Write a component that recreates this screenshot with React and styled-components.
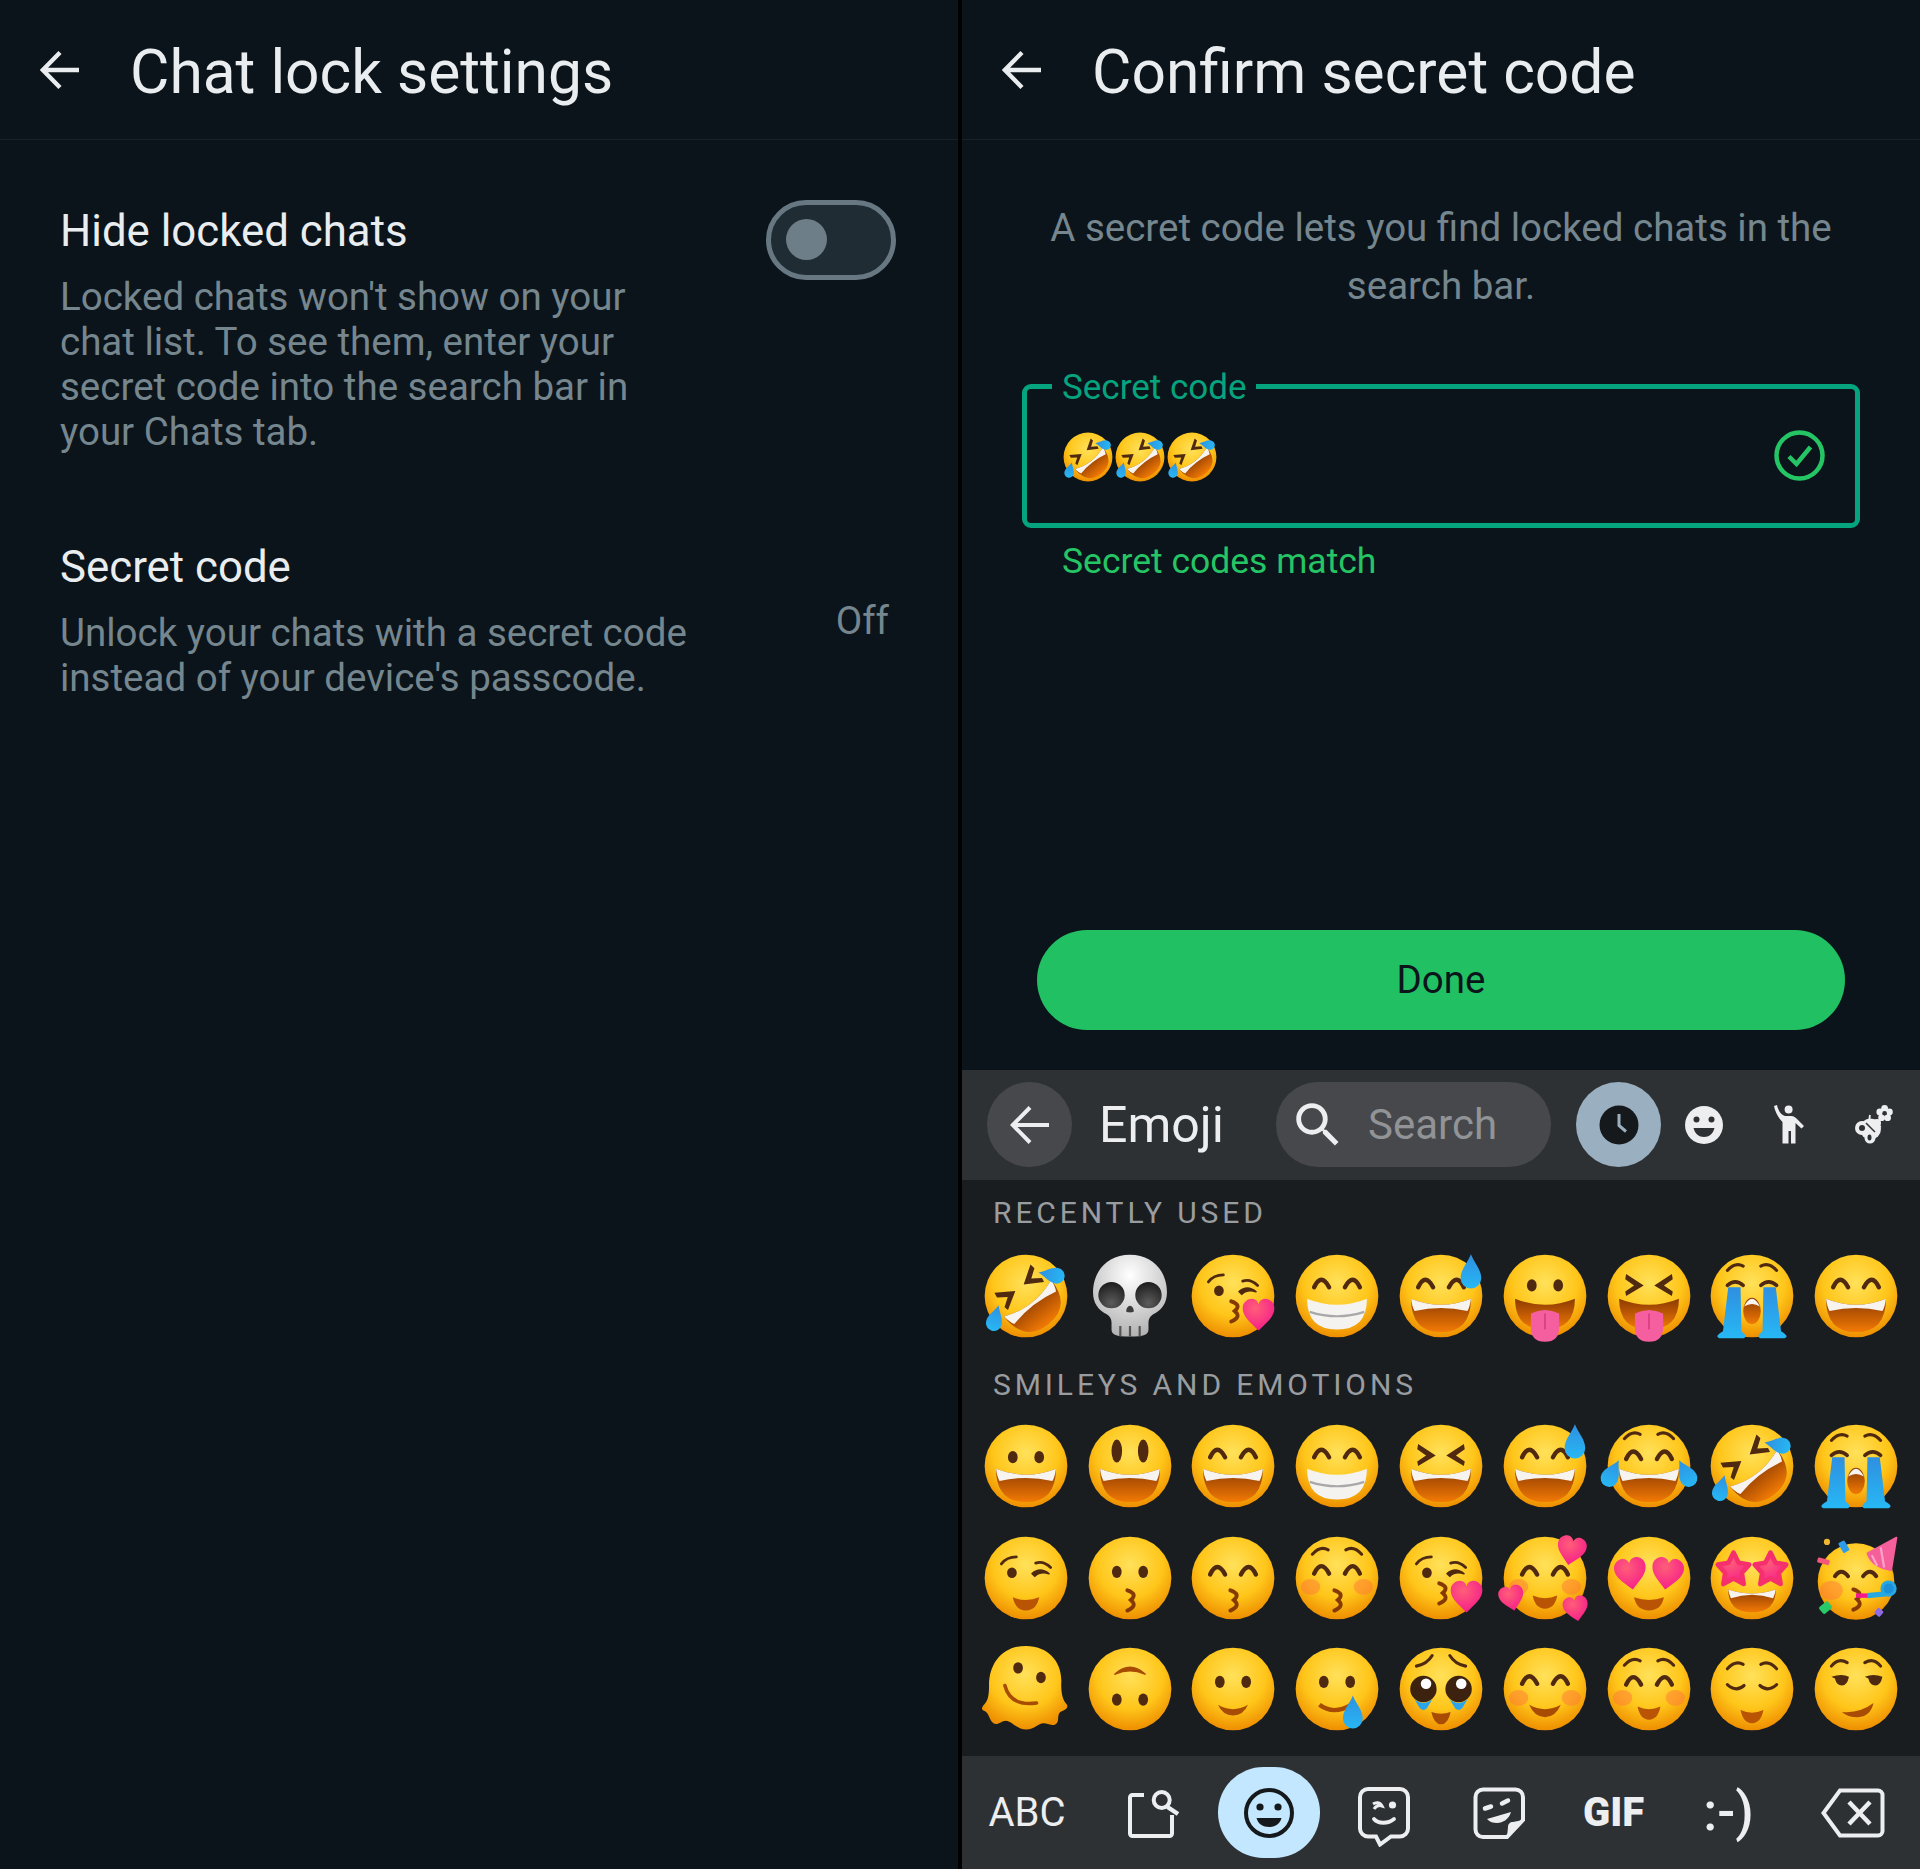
import React from 'react';
import styled, { createGlobalStyle } from 'styled-components';

const Global = createGlobalStyle`
  html, body {
    margin: 0;
    padding: 0;
    background: #0b141a;
  }
  * {
    box-sizing: border-box;
  }
`;

const Page = styled.div`
  display: flex;
  width: 1920px;
  height: 1869px;
  overflow: hidden;
  background: #000;
  font-family: Roboto, 'Liberation Sans', sans-serif;
`;
const Panel = styled.section`
  display: flex;
  flex-direction: column;
  flex: 0 0 958px;
  margin-left: ${(p) => (p.$side === 'left' ? '0' : '4px')};
  height: 100%;
  background: #0b141a;
`;
const Header = styled.header`
  display: flex;
  align-items: center;
  flex: 0 0 140px;
  padding: 0 0 0 40px;
  border-bottom: 1px solid #182127;
`;
const Title = styled.h1`
  margin: 7px 0 0 50px;
  color: #e9edef;
  font-size: 60.5px;
  font-weight: 400;
  line-height: 1;
`;
const SettingRow = styled.div`
  display: flex;
  align-items: ${(p) => (p.$center ? 'center' : 'flex-start')};
  justify-content: space-between;
  padding: 0 63px 0 60px;
  margin-top: ${(p) => p.$top}px;
`;
const SettingTitle = styled.div`
  color: #e9edef;
  font-size: 43.8px;
  line-height: 50px;
`;
const SettingDesc = styled.div`
  margin-top: 18px;
  color: #75868f;
  font-size: 38.5px;
  line-height: 45px;
`;
const Toggle = styled.div`
  display: flex;
  align-items: center;
  width: 130px;
  height: 80px;
  margin-top: -6px;
  margin-right: -1px;
  padding: 0 0 2px 15px;
  border: 5px solid #677883;
  border-radius: 40px;
  background: #1f2c33;
`;
const Knob = styled.div`
  width: 41px;
  height: 41px;
  border-radius: 50%;
  background: #6d7e89;
`;
const OffLabel = styled.div`
  margin: 0 6px 2px 0;
  color: #75868f;
  font-size: 38.5px;
`;
const Intro = styled.p`
  margin: 59px 0 0;
  color: #75868f;
  font-size: 38.5px;
  line-height: 57.5px;
  text-align: center;
`;
const Field = styled.fieldset`
  height: 162px;
  margin: 52px 60px 0;
  padding: 0 30px 0 35px;
  border: 5px solid #06a37f;
  border-radius: 9px;
`;
const Legend = styled.legend`
  margin-left: -10px;
  padding: 0 10px;
  color: #06a37f;
  font-size: 35px;
  line-height: 40px;
  transform: translateY(2px);
`;
const FieldRow = styled.div`
  display: flex;
  align-items: center;
  justify-content: space-between;
  padding-top: 21px;
`;
const FieldEmojis = styled.div`
  display: flex;
  margin-top: 4px;
`;
const FieldEmoji = styled.span`
  display: flex;
  width: 52px;
  justify-content: center;
`;
const MatchText = styled.div`
  margin: 13px 0 0 100px;
  color: #25c566;
  font-size: 35.5px;
  line-height: 40px;
`;
const DoneButton = styled.button`
  align-self: center;
  width: 808px;
  height: 100px;
  margin-top: auto;
  margin-bottom: 40px;
  padding-bottom: 2px;
  border: 0;
  border-radius: 50px;
  background: #21c063;
  color: #0b141a;
  font-family: inherit;
  font-size: 38.5px;
`;
const Keyboard = styled.div`
  display: flex;
  flex-direction: column;
  flex: 0 0 799px;
  background: #1a1d20;
`;
const KeyboardTop = styled.div`
  display: flex;
  align-items: center;
  flex: 0 0 110px;
  padding: 0 0 1px 25px;
  background: #2e3134;
`;
const RoundButton = styled.div`
  display: flex;
  align-items: center;
  justify-content: center;
  flex: 0 0 85px;
  height: 85px;
  border-radius: 50%;
  background: ${(p) => p.$bg || 'transparent'};
`;
const KeyboardTitle = styled.div`
  flex: 0 0 204px;
  padding-left: 27px;
  color: #eceef0;
  font-size: 50px;
`;
const SearchPill = styled.div`
  display: flex;
  align-items: center;
  flex: 0 0 275px;
  height: 85px;
  margin-right: 25px;
  padding-left: 13px;
  border-radius: 42px;
  background: #46484b;
  color: #919396;
  font-size: 42px;
`;
const SearchText = styled.span`
  margin-left: 21px;
`;
const SectionLabel = styled.div`
  margin: 13px 0 ${(p) => (p.$first ? '7px' : '6px')} 31px;
  color: #9a9da0;
  font-size: 30px;
  line-height: 40px;
  letter-spacing: 3.9px;
`;
const EmojiGrid = styled.div`
  display: grid;
  grid-template-columns: repeat(9, 1fr);
  grid-auto-rows: 111.5px;
  align-items: center;
  justify-items: center;
  padding: 0 12px;
`;
const KeyboardBottom = styled.div`
  display: flex;
  align-items: center;
  margin-top: auto;
  flex: 0 0 113px;
  background: #2e3134;
  color: #eceef0;
`;
const BottomSlot = styled.div`
  display: flex;
  align-items: center;
  justify-content: center;
  flex: 0 0 ${(p) => p.$w || 115}px;
  height: 91px;
  padding: ${(p) => p.$top || 0}px 0 0 ${(p) => p.$left || 0}px;
`;
const ActivePill = styled.div`
  display: flex;
  align-items: center;
  justify-content: center;
  width: 102px;
  height: 91px;
  border-radius: 46px;
  background: #c2e7ff;
`;
const BottomText = styled.span`
  font-size: ${(p) => p.$size}px;
  font-weight: ${(p) => p.$weight || 400};
  line-height: 1;
`;

const BackArrow = ({ size = 40, color = '#e9edef', width = 4.4 }) => (
  <svg width={size} height={size} viewBox="0 0 40 40" fill="none" stroke={color} strokeWidth={width}>
    <path d="M39 20H3M20 2.5L2.8 20L20 37.5" />
  </svg>
);

const SearchIcon = () => (
  <svg width="58" height="58" viewBox="0 0 24 24" fill="#eceef0">
    <path d="M15.5 14h-.79l-.28-.27A6.471 6.471 0 0 0 16 9.5 6.5 6.5 0 1 0 9.5 16c1.61 0 3.09-.59 4.23-1.57l.27.28v.79l5 4.99L20.49 19l-4.99-5zm-6 0C7.01 14 5 11.99 5 9.5S7.01 5 9.5 5 14 7.01 14 9.5 11.99 14 9.5 14z" />
  </svg>
);

const ClockIcon = () => (
  <svg width="40" height="40" viewBox="0 0 40 40">
    <circle cx="20" cy="20" r="19.5" fill="#15191c" />
    <path d="M20 9v11.5l7 6" fill="none" stroke="#9aafbf" strokeWidth="3" />
  </svg>
);

const SmileyTab = () => (
  <svg width="40" height="40" viewBox="0 0 40 40">
    <circle cx="20" cy="20" r="19" fill="#eceef0" />
    <circle cx="12.5" cy="14.5" r="3" fill="#2e3134" />
    <circle cx="27.5" cy="14.5" r="3" fill="#2e3134" />
    <path d="M9.5 23h21c-1.500 6-5.500 9-10.500 9s-9-3-10.500-9z" fill="#2e3134" />
  </svg>
);

const PersonTab = () => (
  <svg width="32" height="40" viewBox="0 0 32 40" fill="#eceef0">
    <circle cx="15.6" cy="4.500" r="4" />
    <path d="M1 1L4 0C5 5 8 10 12 11H18C21 11 23 13 25 15L31 21L28.500 23.500L22.500 18V38.500H18V26H15.500V38.500H9.500V17C6 14 2 7 1 1Z" />
  </svg>
);

const ActivityTab = () => (
  <svg width="40" height="40" viewBox="0 0 40 40">
    <g fill="#eceef0">
      <circle cx="16.500" cy="24" r="10.500" />
      <circle cx="8" cy="23" r="7" />
      <circle cx="16" cy="33" r="5.500" />
      <circle cx="23" cy="18" r="4" />
      <circle cx="30.600" cy="3.500" r="3.400" />
      <circle cx="35.400" cy="7" r="3.400" />
      <circle cx="33.600" cy="12.700" r="3.400" />
      <circle cx="27.600" cy="12.700" r="3.400" />
      <circle cx="25.800" cy="7" r="3.400" />
    </g>
    <circle cx="30.600" cy="8.300" r="2.300" fill="#2e3134" />
    <circle cx="8" cy="23" r="3" fill="#2e3134" />
    <ellipse cx="15.500" cy="32.500" rx="2" ry="3" fill="#2e3134" />
    <path d="M15 16l1-6M22 20l5 2M14 28l-1-11" fill="none" stroke="#eceef0" strokeWidth="1.800" />
    <path d="M12 18l9 9" stroke="#2e3134" strokeWidth="1.500" />
  </svg>
);

const CheckCircle = () => (
  <svg width="51" height="51" viewBox="0 0 51 51" fill="none" stroke="#25c566">
    <circle cx="25.500" cy="25.500" r="23" strokeWidth="4.500" />
    <path d="M15 26.500l7.500 7.500L36.500 17" strokeWidth="4.500" />
  </svg>
);

const ScanIcon = () => (
  <svg width="52" height="51" viewBox="0 0 52 51" fill="none" stroke="#eceef0" strokeWidth="4">
    <path d="M16 8H4.500A2.500 2.500 0 0 0 2 10.500V46.500A2.500 2.500 0 0 0 4.500 49H41.500A2.500 2.500 0 0 0 44 46.500V28" />
    <circle cx="33.700" cy="13" r="8" />
    <path d="M39.500 20L50 27" strokeWidth="4.500" />
  </svg>
);

const ActiveSmile = () => (
  <svg width="52" height="52" viewBox="0 0 52 52">
    <circle cx="26" cy="26" r="23" fill="none" stroke="#15191c" strokeWidth="4" />
    <circle cx="17" cy="20" r="3.600" fill="#15191c" />
    <circle cx="35" cy="20" r="3.600" fill="#15191c" />
    <path d="M13.500 31h25c-1.500 6-6.500 9-12.500 9s-11-3-12.500-9z" fill="#15191c" />
  </svg>
);

const StickerBubble = () => (
  <svg width="52" height="60" viewBox="0 0 52 60" fill="none" stroke="#eceef0" strokeWidth="4">
    <path d="M10 2h32a8 8 0 0 1 8 8v31.500a8 8 0 0 1-8 8h-9l-11 8-4-8h-8a8 8 0 0 1-8-8V10a8 8 0 0 1 8-8z" />
    <path d="M15 17c3-2 7-2 9 2-3-1-6 0-8 3" strokeWidth="3" />
    <circle cx="34.500" cy="18" r="3.600" fill="#eceef0" stroke="none" />
    <path d="M16 32c4 5 14 5 20 0" strokeWidth="3.800" strokeLinecap="round" />
  </svg>
);

const StickerIcon = () => (
  <svg width="52" height="52" viewBox="0 0 52 52" fill="none" stroke="#eceef0" strokeWidth="4">
    <path d="M10 2.500h32.500a7.500 7.500 0 0 1 7.500 7.500v23L34 50H10a7.500 7.500 0 0 1-7.500-7.500V10A7.500 7.500 0 0 1 10 2.500z" />
    <path d="M50 33L34 50L35 40C35 37 37 35 40 35Z" fill="#eceef0" stroke="none" />
    <path d="M12 21.500l6-2M29 16.500l6-3" strokeWidth="4.500" strokeLinecap="round" />
    <path d="M14 32L38 25C36 32 30 36 24 36C20 36 17 35 14 32Z" fill="#eceef0" stroke="none" />
  </svg>
);

const BackspaceIcon = () => (
  <svg width="64" height="50" viewBox="0 0 64 50" fill="none" stroke="#eceef0" strokeWidth="4">
    <path d="M19 2.500h38a4.500 4.500 0 0 1 4.500 4.500v36a4.500 4.500 0 0 1-4.500 4.500H19L2.500 25z" />
    <path d="M28 14l21 22M49 14L28 36" strokeWidth="4.500" />
  </svg>
);

/* emoji parts */
const BROWN = '#4f2a10';

const Defs = () => (
  <defs>
    <radialGradient id="faceFill" cx="50%" cy="34%" r="66%">
      <stop offset="0%" stopColor="#ffe15a" />
      <stop offset="60%" stopColor="#ffc61a" />
      <stop offset="100%" stopColor="#ee8e00" />
    </radialGradient>
    <linearGradient id="mouthFill" x1="0" y1="0" x2="0" y2="1">
      <stop offset="0%" stopColor="#8c3a02" />
      <stop offset="100%" stopColor="#f27a05" />
    </linearGradient>
    <linearGradient id="tearFill" x1="0" y1="0" x2="0" y2="1">
      <stop offset="0%" stopColor="#2f8fe0" />
      <stop offset="100%" stopColor="#27b8f5" />
    </linearGradient>
    <radialGradient id="heartFill" cx="40%" cy="30%" r="80%">
      <stop offset="0%" stopColor="#ff5e78" />
      <stop offset="100%" stopColor="#f5178c" />
    </radialGradient>
    <radialGradient id="skullFill" cx="50%" cy="25%" r="85%">
      <stop offset="0%" stopColor="#ffffff" />
      <stop offset="100%" stopColor="#a8a8a8" />
    </radialGradient>
    <radialGradient id="socketFill" cx="50%" cy="80%" r="80%">
      <stop offset="0%" stopColor="#5c5c5c" />
      <stop offset="100%" stopColor="#1c1c1c" />
    </radialGradient>
  </defs>
);

const Face = () => <circle cx="50" cy="50" r="47" fill="url(#faceFill)" />;
const DotEyes = ({ y = 38 }) => (
  <g fill={BROWN}>
    <ellipse cx="35" cy={y} rx="5.500" ry="7" />
    <ellipse cx="65" cy={y} rx="5.500" ry="7" />
  </g>
);
const TallEyes = () => (
  <g fill={BROWN}>
    <ellipse cx="35" cy="33" rx="6" ry="13" />
    <ellipse cx="65" cy="33" rx="6" ry="13" />
  </g>
);
const ArcEyes = ({ y = 40 }) => (
  <g fill="none" stroke={BROWN} strokeWidth="5" strokeLinecap="round">
    <path d={`M24 ${y} Q32 ${y - 17} 41 ${y}`} />
    <path d={`M59 ${y} Q68 ${y - 17} 76 ${y}`} />
  </g>
);
const XEyes = () => (
  <g fill={BROWN}>
    <path d="M24 25L44 38L24 50L23 45L33 38L23 31Z" />
    <path d="M76 25L56 38L76 50L77 45L67 38L77 31Z" />
  </g>
);
const Brows = ({ y = 18 }) => (
  <g fill="none" stroke={BROWN} strokeWidth="3.500" strokeLinecap="round">
    <path d={`M22 ${y + 7} Q31 ${y - 3} 40 ${y + 2}`} />
    <path d={`M60 ${y + 2} Q69 ${y - 3} 78 ${y + 7}`} />
  </g>
);
const OpenSmile = () => (
  <g>
    <path d="M16 53 Q50 67 84 53 Q84 91 50 91 Q16 91 16 53Z" fill="url(#mouthFill)" />
    <path d="M16 53 Q50 67 84 53 Q83 62 80 67 Q50 60 20 67 Q17 62 16 53Z" fill="#f7f4ef" />
  </g>
);
const TeethGrin = () => (
  <g>
    <path d="M16 53 Q50 67 84 53 Q84 88 50 88 Q16 88 16 53Z" fill="#f5f3f0" />
    <path d="M19 68 Q50 78 81 68" fill="none" stroke="#a8a8a8" strokeWidth="2.500" />
  </g>
);
const SmallSmile = ({ y = 68, w = 15 }) => (
  <path d={`M${50 - w} ${y} Q50 ${y + 6} ${50 + w} ${y} Q${50 + w - 3} ${y + 15} 50 ${y + 15} Q${50 - w + 3} ${y + 15} ${50 - w} ${y}Z`} fill="#b85403" />
);
const KissMouth = ({ x = 50, y = 64 }) => (
  <path
    d={`M${x - 3} ${y - 8} Q${x + 9} ${y - 4} ${x + 1} ${y + 3} Q${x + 9} ${y + 10} ${x - 3} ${y + 15}`}
    fill="none"
    stroke="#853a03"
    strokeWidth="4.500"
    strokeLinecap="round"
  />
);
const Blush = () => (
  <g fill="#ff7a3c" opacity="0.5">
    <ellipse cx="20" cy="60" rx="11" ry="9" />
    <ellipse cx="80" cy="60" rx="11" ry="9" />
  </g>
);
const Tear = ({ x, y, s = 1, r = 0 }) => (
  <path
    transform={`translate(${x} ${y}) rotate(${r}) scale(${s})`}
    d="M0 -15 C3 -7 9 -2 9 6 A9 9 0 0 1 -9 6 C-9 -2 -3 -7 0 -15Z"
    fill="url(#tearFill)"
  />
);
const Heart = ({ x, y, s = 1, r = 0 }) => (
  <path
    transform={`translate(${x} ${y}) rotate(${r}) scale(${s})`}
    d="M0 16 C-8 8 -15 3 -15 -5 C-15 -11 -10 -14 -6 -14 C-3 -14 -1 -12 0 -9 C1 -12 3 -14 6 -14 C10 -14 15 -11 15 -5 C15 3 8 8 0 16Z"
    fill="url(#heartFill)"
  />
);
const Star = ({ x, y, s = 1 }) => (
  <path
    transform={`translate(${x} ${y}) scale(${s})`}
    d="M0 -17 L5.500 -6 L17 -4 L9 5 L11 17 L0 11 L-11 17 L-9 5 L-17 -4 L-5.500 -6Z"
    fill="url(#heartFill)"
    stroke="#f5306c"
    strokeWidth="5"
    strokeLinejoin="round"
  />
);
const WinkEyes = () => (
  <g>
    <ellipse cx="34" cy="44" rx="5.500" ry="6" fill={BROWN} />
    <path d="M22 34 Q28 26 39 26" fill="none" stroke={BROWN} strokeWidth="3.200" strokeLinecap="round" />
    <path d="M61 33 Q70 30 78 38" fill="none" stroke={BROWN} strokeWidth="3.200" strokeLinecap="round" />
    <path d="M57 45 Q66 37 76 45 Q66 42 60 48Z" fill={BROWN} stroke={BROWN} strokeWidth="2" strokeLinejoin="round" />
  </g>
);
const TongueMouth = () => (
  <g>
    <path d="M16 53 Q50 67 84 53 Q84 88 50 88 Q16 88 16 53Z" fill="url(#mouthFill)" />
    <path d="M34 70 Q50 62 66 70 V86 Q66 102 50 102 Q34 102 34 86Z" fill="#f55fa0" />
    <path d="M50 70v18" stroke="#d93f80" strokeWidth="2" />
  </g>
);

const faces = {
  rofl: (
    <>
      <Face />
      <g transform="rotate(-38 50 50)">
        <XEyes />
        <OpenSmile />
      </g>
      <Tear x={79} y={26} s={1} r={-80} />
      <Tear x={15} y={75} s={1} r={15} />
    </>
  ),
  skull: (
    <>
      <path
        d="M50 3C24 3 8 22 8 46c0 12 6 20 16 25 3 2 5 5 5 9v8c0 6 5 8 21 8s21-2 21-8v-8c0-4 2-7 5-9 10-5 16-13 16-25C92 22 76 3 50 3z"
        fill="url(#skullFill)"
      />
      <ellipse cx="29" cy="49" rx="15" ry="15" fill="url(#socketFill)" />
      <ellipse cx="71" cy="49" rx="15" ry="15" fill="url(#socketFill)" />
      <path d="M50 61c3 0 5 5 4 7-1 1-7 1-8 0-1-2 1-7 4-7z" fill="#3d3d3d" />
      <path d="M39 84v12M50 84v12M61 84v12" stroke="#555" strokeWidth="2.500" />
    </>
  ),
  kissHeart: (
    <>
      <Face />
      <WinkEyes />
      <KissMouth x={51} y={64} />
      <Heart x={79} y={70} s={1.200} />
    </>
  ),
  beam: (
    <>
      <Face />
      <ArcEyes />
      <TeethGrin />
    </>
  ),
  sweat: (
    <>
      <Face />
      <ArcEyes />
      <OpenSmile />
      <Tear x={84} y={22} s={1.300} />
    </>
  ),
  tongue: (
    <>
      <Face />
      <DotEyes y={38} />
      <TongueMouth />
    </>
  ),
  squintTongue: (
    <>
      <Face />
      <XEyes />
      <TongueMouth />
    </>
  ),
  sob: (
    <>
      <Face />
      <Brows y={14} />
      <path d="M22 38 Q31 30 40 38M60 38 Q69 30 78 38" fill="none" stroke={BROWN} strokeWidth="4" strokeLinecap="round" />
      <path d="M23 40h14l1 50c3 3 7 5 3 8H13c-5-2-1-5 4-8z" fill="url(#tearFill)" />
      <path d="M63 40h14l6 50c5 3 9 6 4 8H59c-4-3 0-5 3-8z" fill="url(#tearFill)" />
      <ellipse cx="50" cy="67" rx="10" ry="15" fill="url(#mouthFill)" />
      <path d="M41 62 Q50 44 59 62Q50 56 41 62Z" fill="#f7f4ef" />
    </>
  ),
  grin: (
    <>
      <Face />
      <ArcEyes />
      <OpenSmile />
    </>
  ),
  grinning: (
    <>
      <Face />
      <DotEyes y={40} />
      <OpenSmile />
    </>
  ),
  smiley: (
    <>
      <Face />
      <TallEyes />
      <OpenSmile />
    </>
  ),
  squint: (
    <>
      <Face />
      <XEyes />
      <OpenSmile />
    </>
  ),
  joy: (
    <>
      <Face />
      <Brows y={12} />
      <ArcEyes y={42} />
      <OpenSmile />
      <Tear x={8} y={58} s={1.100} r={28} />
      <Tear x={92} y={58} s={1.100} r={-28} />
    </>
  ),
  wink: (
    <>
      <Face />
      <WinkEyes />
      <SmallSmile y={72} w={15} />
    </>
  ),
  kissing: (
    <>
      <Face />
      <DotEyes y={43} />
      <KissMouth y={72} />
    </>
  ),
  kissClosed: (
    <>
      <Face />
      <ArcEyes y={46} />
      <KissMouth y={72} />
    </>
  ),
  kissBlush: (
    <>
      <Face />
      <Blush />
      <Brows y={16} />
      <ArcEyes y={45} />
      <KissMouth y={72} />
    </>
  ),
  hearts: (
    <>
      <Face />
      <Blush />
      <ArcEyes y={46} />
      <SmallSmile y={70} w={14} />
      <Heart x={80} y={18} s={1.100} r={12} />
      <Heart x={12} y={72} s={0.950} r={-12} />
      <Heart x={85} y={84} s={0.950} r={-10} />
    </>
  ),
  heartEyes: (
    <>
      <Face />
      <Heart x={29} y={44} s={1.200} r={-8} />
      <Heart x={71} y={44} s={1.200} r={8} />
      <SmallSmile y={72} w={17} />
    </>
  ),
  starEyes: (
    <>
      <Face />
      <Star x={29} y={39} s={1.050} />
      <Star x={71} y={39} s={1.050} />
      <path d="M23 63 Q50 72 77 63 Q77 89 50 89 Q23 89 23 63Z" fill="url(#mouthFill)" />
      <path d="M23 63 Q50 72 77 63 Q76 69 74 73 Q50 65 26 73 Q24 69 23 63Z" fill="#f7f4ef" />
    </>
  ),
  party: (
    <>
      <circle cx="50" cy="54" r="43.500" fill="url(#faceFill)" />
      <ellipse cx="22" cy="64" rx="13" ry="11" fill="#ff7a3c" opacity="0.5" />
      <path d="M26 48 Q33 38 41 48M58 48 Q66 38 73 48" fill="none" stroke={BROWN} strokeWidth="4.500" strokeLinecap="round" />
      <KissMouth x={50} y={71} />
      <path d="M96 4 L63 22 Q68 38 90 41Z" fill="#f45f9c" stroke="#f45f9c" strokeWidth="2" strokeLinejoin="round" />
      <path d="M78 15L82 38M68 24l6 12" stroke="#ffa3c9" strokeWidth="2.500" />
      <path d="M50 70H64" stroke="#f5178c" strokeWidth="5" />
      <path d="M63 70L84 68" stroke="#27a8e0" strokeWidth="6" />
      <circle cx="87" cy="62" r="7.500" fill="#1b90d8" stroke="#27a8e0" strokeWidth="3.500" />
      <rect x="32" y="8" width="8" height="13" rx="1.500" fill="#2e9be6" transform="rotate(-30 36 14)" />
      <circle cx="17" cy="9" r="3.500" fill="#f2b632" />
      <rect x="6" y="28" width="14" height="6" rx="1.500" fill="#f4577e" transform="rotate(15 13 31)" />
      <rect x="9" y="79" width="13" height="10" rx="2" fill="#29c96a" transform="rotate(-40 15 84)" />
      <rect x="72" y="85" width="8" height="8" rx="1.500" fill="#8e6be8" transform="rotate(40 76 89)" />
    </>
  ),
  melting: (
    <>
      <path
        d="M50 1C24 1 8 20 8 46c0 10-1 17-5 21-4 4-4 7 0 8 5 2 5 10 10 14 5 3 9-3 14-3 7 0 12 10 23 10s14-8 21-7c6 1 10 4 14 0 3-4 0-9 4-13 6-2 10-5 7-9-4-4-6-11-6-22C92 20 76 1 50 1z"
        fill="url(#faceFill)"
      />
      <ellipse cx="41" cy="26" rx="5.500" ry="6.500" fill={BROWN} />
      <ellipse cx="67" cy="37" rx="5.500" ry="6.500" fill={BROWN} />
      <path d="M26 46 Q32 70 62 66" fill="none" stroke="#a84b03" strokeWidth="4" strokeLinecap="round" />
    </>
  ),
  upsideDown: (
    <>
      <Face />
      <DotEyes y={62} />
      <path d="M33 33 Q50 18 67 33 Q50 25 33 33Z" fill="#a84b03" stroke="#a84b03" strokeWidth="2" strokeLinejoin="round" />
    </>
  ),
  slight: (
    <>
      <Face />
      <DotEyes y={42} />
      <path d="M33 68 Q50 78 67 68 Q62 80 50 80 Q38 80 33 68Z" fill="#a84b03" />
    </>
  ),
  tearSmile: (
    <>
      <Face />
      <DotEyes y={42} />
      <path d="M30 68 Q46 80 66 68" fill="none" stroke="#a84b03" strokeWidth="5" />
      <Tear x={68} y={76} s={1.250} />
    </>
  ),
  pleading: (
    <>
      <Face />
      <path d="M40 12 Q34 22 22 24M60 12 Q66 22 78 24" fill="none" stroke={BROWN} strokeWidth="3.500" strokeLinecap="round" />
      <circle cx="30" cy="50" r="15" fill="#3d2210" />
      <circle cx="70" cy="50" r="15" fill="#3d2210" />
      <circle cx="33" cy="44" r="6" fill="#fff" />
      <circle cx="73" cy="44" r="6" fill="#fff" />
      <path d="M20 62 Q30 70 40 62 L34 72 Q30 76 26 72Z" fill="#2aa5ec" />
      <path d="M60 62 Q70 70 80 62 L74 72 Q70 76 66 72Z" fill="#2aa5ec" />
      <path d="M39 76 Q50 80 61 76 Q58 90 50 90 Q42 90 39 76Z" fill="#a84b03" />
    </>
  ),
  blushSmile: (
    <>
      <Face />
      <Blush />
      <ArcEyes y={44} />
      <path d="M32 68 Q50 78 68 68 Q62 82 50 82 Q38 82 32 68Z" fill="#a84b03" />
    </>
  ),
  relaxed: (
    <>
      <Face />
      <Blush />
      <Brows y={16} />
      <ArcEyes y={45} />
      <SmallSmile y={70} w={13} />
    </>
  ),
  relieved: (
    <>
      <Face />
      <Brows y={20} />
      <path d="M22 45 Q32 54 41 46M59 46 Q68 54 78 45" fill="none" stroke={BROWN} strokeWidth="3.500" strokeLinecap="round" />
      <SmallSmile y={74} w={13} />
    </>
  ),
  smirk: (
    <>
      <Face />
      <path d="M22 24 Q30 14 40 20M60 20 Q70 14 78 24" fill="none" stroke={BROWN} strokeWidth="3.500" strokeLinecap="round" />
      <path d="M22 36 Q34 32 42 36 Q40 46 34 46 Q28 46 26 38Z M60 36 Q70 32 80 36 Q78 46 72 46 Q66 46 64 38Z" fill={BROWN} />
      <path d="M34 76 Q54 78 70 66 Q66 82 52 82 Q40 82 34 76Z" fill="#a84b03" />
    </>
  ),
};

const Emoji = ({ name, size = 88 }) => (
  <svg width={size} height={size} viewBox="0 0 100 100" overflow="visible">
    <Defs />
    {faces[name]}
  </svg>
);

const recent = ['rofl', 'skull', 'kissHeart', 'beam', 'sweat', 'tongue', 'squintTongue', 'sob', 'grin'];
const smileys = [
  'grinning', 'smiley', 'grin', 'beam', 'squint', 'sweat', 'joy', 'rofl', 'sob',
  'wink', 'kissing', 'kissClosed', 'kissBlush', 'kissHeart', 'hearts', 'heartEyes', 'starEyes', 'party',
  'melting', 'upsideDown', 'slight', 'tearSmile', 'pleading', 'blushSmile', 'relaxed', 'relieved', 'smirk',
];

const ChatLockPanel = () => (
  <Panel $side="left">
    <Header>
      <BackArrow />
      <Title>Chat lock settings</Title>
    </Header>
    <SettingRow $top={66}>
      <div>
        <SettingTitle>Hide locked chats</SettingTitle>
        <SettingDesc>
          Locked chats won't show on your<br />
          chat list. To see them, enter your<br />
          secret code into the search bar in<br />
          your Chats tab.
        </SettingDesc>
      </div>
      <Toggle>
        <Knob />
      </Toggle>
    </SettingRow>
    <SettingRow $top={88} $center>
      <div>
        <SettingTitle>Secret code</SettingTitle>
        <SettingDesc>
          Unlock your chats with a secret code<br />
          instead of your device's passcode.
        </SettingDesc>
      </div>
      <OffLabel>Off</OffLabel>
    </SettingRow>
  </Panel>
);

const ConfirmPanel = () => (
  <Panel $side="right">
    <Header>
      <BackArrow />
      <Title>Confirm secret code</Title>
    </Header>
    <Intro>
      A secret code lets you find locked chats in the<br />
      search bar.
    </Intro>
    <Field>
      <Legend>Secret code</Legend>
      <FieldRow>
        <FieldEmojis>
          {[0, 1, 2].map((i) => (
            <FieldEmoji key={i}>
              <Emoji name="rofl" size={52} />
            </FieldEmoji>
          ))}
        </FieldEmojis>
        <CheckCircle />
      </FieldRow>
    </Field>
    <MatchText>Secret codes match</MatchText>
    <DoneButton>Done</DoneButton>
    <Keyboard>
      <KeyboardTop>
        <RoundButton $bg="#46484b">
          <BackArrow color="#eceef0" width={4} />
        </RoundButton>
        <KeyboardTitle>Emoji</KeyboardTitle>
        <SearchPill>
          <SearchIcon />
          <SearchText>Search</SearchText>
        </SearchPill>
        <RoundButton $bg="#9aafbf">
          <ClockIcon />
        </RoundButton>
        <RoundButton>
          <SmileyTab />
        </RoundButton>
        <RoundButton>
          <PersonTab />
        </RoundButton>
        <RoundButton>
          <ActivityTab />
        </RoundButton>
      </KeyboardTop>
      <SectionLabel $first>RECENTLY USED</SectionLabel>
      <EmojiGrid>
        {recent.map((name, i) => (
          <Emoji key={i} name={name} />
        ))}
      </EmojiGrid>
      <SectionLabel>SMILEYS AND EMOTIONS</SectionLabel>
      <EmojiGrid>
        {smileys.map((name, i) => (
          <Emoji key={i} name={name} />
        ))}
      </EmojiGrid>
      <KeyboardBottom>
        <BottomSlot $w={130}>
          <BottomText $size={40}>ABC</BottomText>
        </BottomSlot>
        <BottomSlot $w={119} $left={4}>
          <ScanIcon />
        </BottomSlot>
        <BottomSlot>
          <ActivePill>
            <ActiveSmile />
          </ActivePill>
        </BottomSlot>
        <BottomSlot $top={8}>
          <StickerBubble />
        </BottomSlot>
        <BottomSlot>
          <StickerIcon />
        </BottomSlot>
        <BottomSlot>
          <BottomText $size={40} $weight={900}>GIF</BottomText>
        </BottomSlot>
        <BottomSlot>
          <BottomText $size={53} $weight={500}>:-)</BottomText>
        </BottomSlot>
        <BottomSlot $w={134}>
          <BackspaceIcon />
        </BottomSlot>
      </KeyboardBottom>
    </Keyboard>
  </Panel>
);

const App = () => (
  <Page>
    <Global />
    <ChatLockPanel />
    <ConfirmPanel />
  </Page>
);

export default App;
